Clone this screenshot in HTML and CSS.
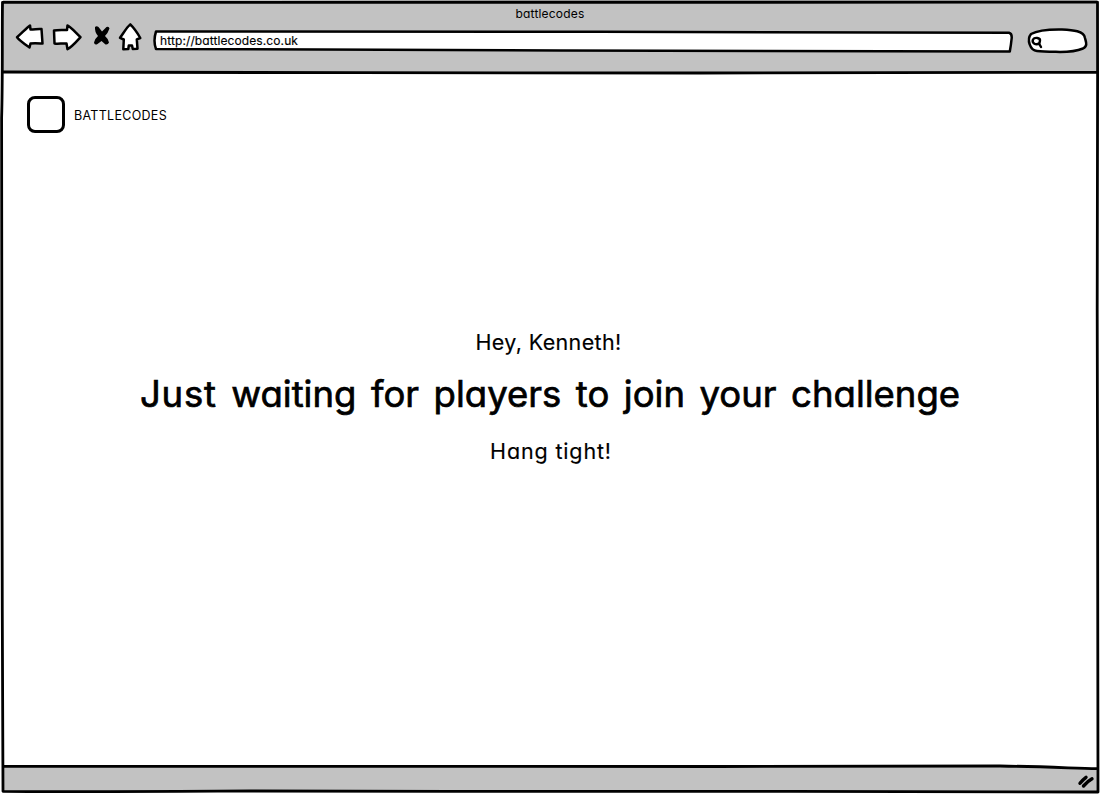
FILE: index.html
```html
<!DOCTYPE html>
<html lang="en">
<head>
<meta charset="utf-8">
<title>battlecodes</title>
<link rel="stylesheet" href="styles.css">
</head>
<body>
<div class="window">
  <header class="chrome">
    <div class="title"><span>battlecodes</span></div>
    <div class="toolbar">
      <svg class="nav" width="140" height="40" viewBox="10 18 140 40">
        <g class="sketch">
          <path d="M17 37.2 C22 33 26 28.500 30 25.500 L30.500 29.500 C35 29.500 38 28.500 41.500 29 L42.500 43.500 C38 43.300 34 43 30.500 43.500 L29.500 47.500 C26 45 20 41 17 37.200Z"/>
          <path d="M54 30.500 C58 29.600 62 30 67 30 L67.500 25.500 C70 26 76 33 80.500 37.200 C77 41 72 47 67.500 49.200 L66.500 43.500 C62 43 59 44.200 54.500 43.500Z"/>
          <path d="M120 37.800 C123 34 126.500 27.500 130.300 24.400 C134 28 138 34 140.300 38 L136.800 39.300 L137.500 48.700 L132.800 49 L132 45.500 L128.800 45.500 L128.300 49 L123.300 49.200 L123.800 39.500Z"/>
        </g>
        <path class="cross" d="M95 27 Q96.500 25.500 98.500 27 L102 31.500 L106.500 27 Q109 26 109.500 28.500 Q108 33 105 36 Q108.500 39 109 42.500 Q108 45 105.500 44.500 L101.500 41 L97.500 44 Q94.500 45.500 94 42.500 Q94.500 39 98 36 Q94.500 32 95 27Z"/>
      </svg>
      <div class="address">
        <svg class="shape" width="862" height="26" viewBox="152 28 862 26">
          <path class="sketch" d="M156 31.500 C300 31 450 31.600 600 31.700 C740 31.200 880 32 1009 32.800 Q1012 33.500 1011.700 38 Q1011 45 1009.800 51.500 C850 50.600 700 51.500 560 50.400 C430 51 300 50 156 49 Q153 41 156 31.500Z"/>
        </svg>
        <span class="url">http://battlecodes.co.uk</span>
      </div>
      <svg class="search" width="64" height="28" viewBox="1026 27 64 28">
        <path class="sketch" d="M1031 34 C1039 29.500 1051 29.300 1062 29.500 C1073 30 1084 31 1085 38 C1086 42 1088 46 1083 48.500 C1077 51 1069 52 1060 52 C1051 51.700 1043 51.500 1037 51 C1030 50.500 1026.500 39.500 1031 34Z"/>
        <path class="lens" d="M1039.500 43 C1036 46 1031.500 43 1033 39.500 C1034.500 37 1040.300 37.500 1040 40.500 L1039.300 44 L1041 47"/>
      </svg>
    </div>
  </header>
  <main class="page">
    <div class="brand">
      <div class="logo"></div>
      <span class="brand-name">BATTLECODES</span>
    </div>
    <section class="message">
      <p class="hello">Hey, Kenneth!</p>
      <h1 class="status"><span class="lead">Just</span> waiting for players to join your challenge</h1>
      <p class="note">Hang tight!</p>
    </section>
  </main>
  <svg class="frame" width="1100" height="794" viewBox="0 0 1100 794">
    <path class="bottom-bar" d="M3 766.500 L720 766.500 L1000 766 L1098 769 V792 H3Z"/>
    <path class="line" d="M2.500 2.300 C300 1.700 700 2.300 1097.500 2.200 C1098 100 1096.800 180 1097.200 310 C1098 470 1097 600 1098 792 C900 791.300 800 791.500 650 791.400 C500 791.400 400 791.200 250 791 C150 791.500 80 792 3 791.300 C2 700 2.500 580 2 480 C3 350 2.500 230 1.600 118 C2.800 80 2 40 2.500 2.300Z"/>
    <path class="line" d="M3 72 C200 73 500 72.500 700 73 L1097 72.300 M3 766.300 C200 767.300 450 766.500 720 766.500 C850 765.700 950 766.500 1000 766 C1040 766.500 1070 768 1097 768.700"/>
    <path class="grip" d="M1080 783.300 Q1083 779.500 1086 777.300 M1083.500 786 Q1088 781 1092 778.800"/>
  </svg>
</div>
</body>
</html>
```

FILE: styles.css
```css
* { box-sizing: border-box; }
body {
  margin: 0;
  background: #fff;
  color: #000;
  font-family: Inter, "Open Sans", sans-serif;
  font-feature-settings: "cv11" 1, "calt" 0;
}
.window {
  position: relative;
  width: 1100px;
  height: 794px;
  overflow: hidden;
  display: flex;
  flex-direction: column;
}
.chrome {
  height: 73px;
  margin: 0 3px;
  background: #c2c2c2;
}
.title {
  height: 28px;
  line-height: 28px;
  font-size: 12px;
  letter-spacing: 0.2px;
  text-align: center;
}
.toolbar {
  display: flex;
  align-items: flex-start;
  margin-left: 7px;
}
.nav { margin-top: -10px; }
.sketch {
  fill: #fff;
  stroke: #000;
  stroke-width: 2.5;
  stroke-linejoin: round;
}
.cross { fill: #000; }
.address {
  display: grid;
  width: 862px;
  height: 26px;
  margin-left: 2px;
}
.shape, .url { grid-area: 1 / 1; }
.url {
  padding-left: 8px;
  line-height: 25px;
  font-size: 12px;
  letter-spacing: 0.1px;
  -webkit-text-stroke: 0.15px #000;
}
.search { margin: -1px 0 0 12px; }
.lens { fill: none; stroke: #000; stroke-width: 2.4; stroke-linecap: round; }
.page {
  flex: 1;
  padding: 23px 27px 0;
}
.brand {
  display: flex;
  align-items: center;
  gap: 9px;
}
.logo {
  width: 38px;
  height: 37px;
  border: 3px solid #000;
  border-radius: 8px;
}
.brand-name {
  padding-top: 2px;
  font-size: 12.5px;
  line-height: 20px;
  letter-spacing: 0.3px;
}
.message {
  display: flex;
  flex-direction: column;
  align-items: center;
  padding-top: 192px;
}
.message p, .message h1 { margin: 0; white-space: nowrap; }
.message .hello { padding-right: 3px; letter-spacing: 0.35px; }
.hello, .note {
  font-size: 21.5px;
  line-height: 34px;
  -webkit-text-stroke: 0.15px #000;
}
.status {
  font-size: 36.5px;
  line-height: 70px;
  font-weight: 400;
  letter-spacing: 0;
  word-spacing: 4.3px;
  -webkit-text-stroke: 0.7px #000;
}
.lead { letter-spacing: 0.8px; }
.message .note { padding-left: 2px; letter-spacing: 0.85px; margin-top: 5px; }
.frame { position: absolute; inset: 0; }
.bottom-bar { fill: #c2c2c2; }
.line { fill: none; stroke: #000; stroke-width: 2.8; stroke-linejoin: round; }
.grip { fill: none; stroke: #000; stroke-width: 3.4; stroke-linecap: round; }
```
